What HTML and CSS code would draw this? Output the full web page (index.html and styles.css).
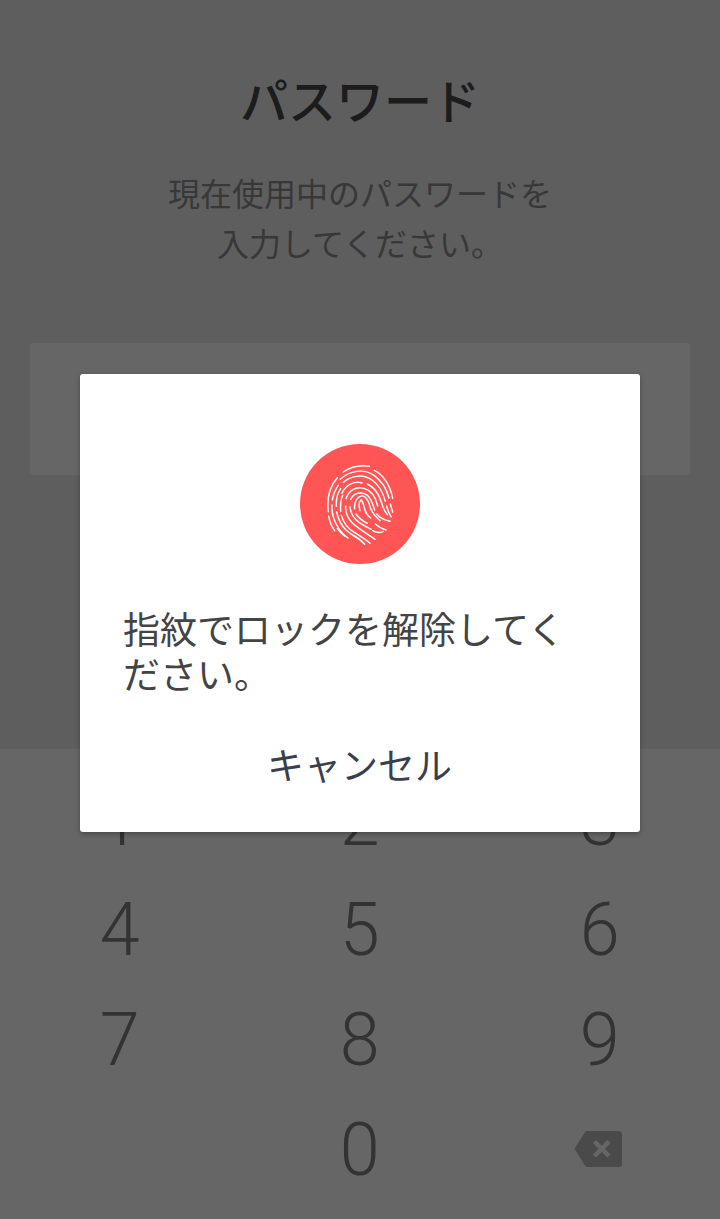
FILE: index.html
```html
<!DOCTYPE html>
<html lang="ja">
<head>
<meta charset="utf-8">
<title>パスワード</title>
<link rel="stylesheet" href="styles.css">
</head>
<body>
<main class="screen">
  <section class="lock">
    <h1 class="lock-title">パスワード</h1>
    <p class="lock-hint">現在使用中のパスワードを<br>入力してください。</p>
    <div class="lock-field"></div>
  </section>
  <section class="keypad">
    <span class="key"><span class="digit">1</span></span>
    <span class="key"><span class="digit">2</span></span>
    <span class="key"><span class="digit">3</span></span>
    <span class="key"><span class="digit">4</span></span>
    <span class="key"><span class="digit">5</span></span>
    <span class="key"><span class="digit">6</span></span>
    <span class="key"><span class="digit">7</span></span>
    <span class="key"><span class="digit">8</span></span>
    <span class="key"><span class="digit">9</span></span>
    <span class="key"></span>
    <span class="key"><span class="digit">0</span></span>
    <span class="key">
      <svg class="backspace" viewBox="0 0 48 36" width="48" height="36">
        <path class="backspace-body" d="M0.5 17.5 11 1.2Q12 0 13.5 0H44.5Q48 0 48 3.5V32.5Q48 36 44.5 36H13.5Q12 36 11 34.8Z"/>
        <path class="backspace-x" d="M20.5 10.5 35 25M35 10.5 20.5 25"/>
      </svg>
    </span>
  </section>
  <div class="scrim">
    <div class="dialog">
      <div class="badge">
        <svg class="print" viewBox="60 60 360 360" width="120" height="120">
          <g class="ridges">
            <path d="M190 144C212 129 242 122 268 127"/>
            <path d="M283 139C310 151 331 186 338 223"/>
            <path d="M172 161C150 186 140 222 145 263"/>
            <path d="M146 277C149 292 155 308 164 320"/>
            <path d="M181 166C208 140 252 132 283 155C305 171 320 196 327 222"/>
            <path d="M331 240C334 250 336 257 338 264"/>
            <path d="M157 228C160 212 166 196 175 184"/>
            <path d="M156 243C155 264 160 285 170 303C178 318 190 332 204 342"/>
            <path d="M172 314C180 324 186 331 194 336"/>
            <path d="M190 175C215 153 250 150 276 168C296 182 309 205 316 232"/>
            <path d="M320 246C323 258 327 268 333 278"/>
            <path d="M169 247C168 228 172 208 182 194"/>
            <path d="M170 264C174 285 184 304 198 318C210 329 218 334 230 340"/>
            <path d="M222 336C233 341 243 349 254 361"/>
            <path d="M186 208C198 180 226 170 246 177"/>
            <path d="M262 180C284 190 296 208 304 234C308 250 314 262 322 272"/>
            <path d="M182 262C181 242 182 226 188 214"/>
            <path d="M184 274C190 296 204 314 224 326C242 337 258 347 270 358"/>
            <path d="M198 224C206 200 228 186 252 193C276 200 288 222 293 246"/>
            <path d="M197 246C196 264 204 284 218 298C234 313 254 325 285 346"/>
            <path d="M212 226C220 208 245 200 262 214C275 226 279 243 284 258"/>
            <path d="M290 270C298 280 312 288 330 292"/>
            <path d="M210 248C211 266 222 284 238 296C250 304 262 311 274 316"/>
            <path d="M278 320C288 327 298 328 310 322"/>
            <path d="M224 254C222 232 232 218 246 215C260 216 266 232 270 248C274 262 282 274 300 290"/>
            <path d="M240 260C236 246 236 234 243 228C250 232 251 246 255 258C258 268 264 276 272 282"/>
            <path d="M228 270C236 282 250 292 262 298"/>
            <path d="M286 300C294 308 304 314 318 318"/>
          </g>
        </svg>
      </div>
      <p class="dialog-text">指紋でロックを解除してください。</p>
      <div class="dialog-action">キャンセル</div>
    </div>
  </div>
</main>
</body>
</html>
```

FILE: styles.css
```css
* {
  box-sizing: border-box;
}

html,
body {
  margin: 0;
  padding: 0;
  height: 100%;
}

body {
  font-family: "Noto Sans CJK JP", "Noto Sans", sans-serif;
  background: #ebebeb;
  overflow: hidden;
}

.screen {
  position: relative;
  display: flex;
  flex-direction: column;
  width: 720px;
  height: 1219px;
}

.lock {
  display: flex;
  flex-direction: column;
  align-items: center;
  height: 749px;
  padding: 0 30px;
}

.lock-title {
  margin: 64px 0 0;
  font-size: 48px;
  line-height: 68px;
  font-weight: 500;
  color: #464646;
}

.lock-hint {
  margin: 35px 0 0;
  font-size: 32px;
  line-height: 50px;
  text-align: center;
  color: #8c8c8c;
}

.lock-field {
  width: 100%;
  height: 132px;
  margin-top: 76px;
  background: #fff;
  border-radius: 3px;
}

.keypad {
  flex: 1;
  display: grid;
  grid-template-columns: 240px 240px 240px;
  grid-auto-rows: 110px;
  padding-top: 15px;
  background: #fff;
}

.key {
  display: flex;
  align-items: center;
  justify-content: center;
}

.digit {
  font-family: Roboto, sans-serif;
  font-weight: 300;
  font-size: 75px;
  line-height: 0.8;
  color: #808080;
  transform: scaleX(0.96);
}

.backspace {
  display: block;
  margin: 0 4px 0 0;
}

.backspace-body {
  fill: #b9b9b9;
}

.backspace-x {
  fill: none;
  stroke: #fff;
  stroke-width: 4.5;
}

.scrim {
  position: absolute;
  inset: 0;
  display: flex;
  justify-content: center;
  align-items: flex-start;
  padding-top: 374px;
  background: rgba(0, 0, 0, 0.6);
}

.dialog {
  display: flex;
  flex-direction: column;
  width: 560px;
  height: 458px;
  padding: 70px 44px 0 43px;
  background: #fff;
  border-radius: 3px;
  box-shadow: 0 2px 5px rgba(0, 0, 0, 0.3);
}

.badge {
  align-self: center;
  width: 120px;
  height: 120px;
  margin-left: 1px;
  border-radius: 50%;
  background: #ff5555;
}

.print {
  display: block;
}

.ridges path {
  fill: none;
  stroke: #fff;
  stroke-width: 4.4;
  stroke-linecap: round;
}

.dialog-text {
  margin: 42px 0 0;
  font-size: 37px;
  line-height: 45px;
  color: #444;
}

.dialog-action {
  margin-top: 46px;
  font-size: 37px;
  line-height: 44px;
  text-align: center;
  color: #3a3f4b;
}
```
